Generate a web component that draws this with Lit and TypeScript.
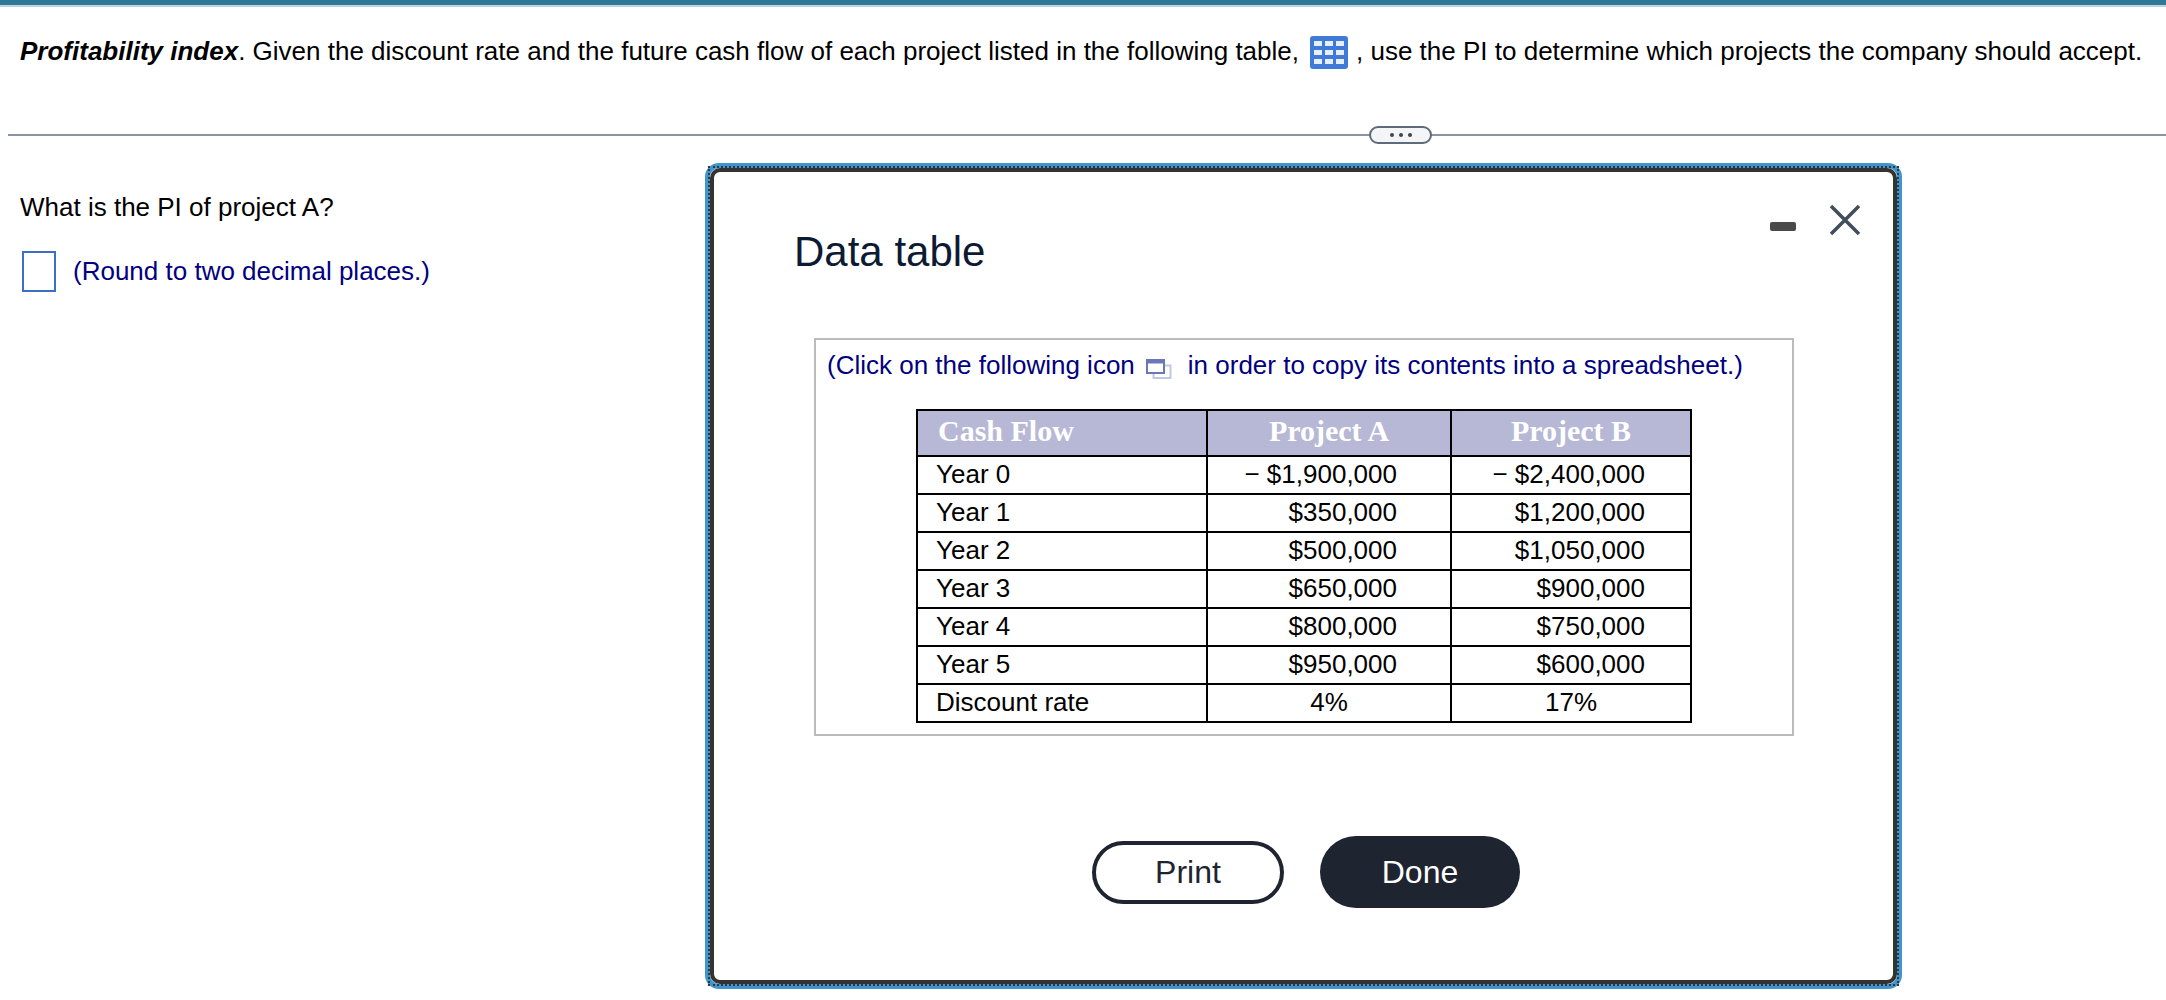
import { LitElement, html, css } from 'lit';
import { customElement } from 'lit/decorators.js';

const rows = [
  ['Year 0', '\u2212 $1,900,000', '\u2212 $2,400,000'],
  ['Year 1', '$350,000', '$1,200,000'],
  ['Year 2', '$500,000', '$1,050,000'],
  ['Year 3', '$650,000', '$900,000'],
  ['Year 4', '$800,000', '$750,000'],
  ['Year 5', '$950,000', '$600,000'],
];

@customElement('app-root')
export class AppRoot extends LitElement {
  static styles = css`
    :host {
      display: block;
      position: relative;
      height: 1000px;
      overflow: hidden;
      background: #fff;
      color: #000;
      font-family: "Liberation Sans", Arial, sans-serif;
      font-size: 26px;
    }
    .topbar {
      height: 5px;
      background: #2f7898;
      border-bottom: 2px solid #c0d3de;
    }
    .question {
      height: 127px;
      box-sizing: border-box;
      padding: 28px 0 0 20px;
      line-height: 32px;
      white-space: nowrap;
    }
    .grid-icon {
      display: inline-block;
      width: 38px;
      height: 33px;
      margin: 0 8px 0 11px;
      vertical-align: -9px;
    }
    .divider {
      position: relative;
      height: 2px;
      margin-left: 8px;
      background: #8a94a0;
    }
    .handle {
      position: absolute;
      left: 1361px;
      top: -8px;
      box-sizing: border-box;
      width: 63px;
      height: 18px;
      display: flex;
      align-items: center;
      justify-content: center;
      gap: 5px;
      background: #f3f5f7;
      border: 2px solid #5f6b7a;
      border-radius: 9px;
    }
    .handle i {
      width: 4px;
      height: 4px;
      border-radius: 50%;
      background: #3c4654;
    }
    .work {
      padding: 55px 0 0 20px;
    }
    .work p {
      margin: 0;
      line-height: 32px;
    }
    .answer {
      display: flex;
      align-items: center;
      gap: 17px;
      margin: 28px 0 0 2px;
      color: #000080;
    }
    .box {
      width: 34px;
      height: 41px;
      box-sizing: border-box;
      border: 2px solid #3a6fc4;
    }
    .dialog {
      position: absolute;
      left: 705px;
      top: 163px;
      width: 1197px;
      height: 826px;
      box-sizing: border-box;
      border: 5px solid #4095cf;
      border-radius: 14px;
      background: #fff;
    }
    .dialog::after {
      content: "";
      position: absolute;
      inset: -2px;
      border: 2px dotted #33383d;
      pointer-events: none;
    }
    .frame {
      position: relative;
      height: 100%;
      box-sizing: border-box;
      border: 4px solid #333;
      border-radius: 10px;
      padding: 56px 0 0 80px;
    }
    .window-controls {
      position: absolute;
      right: 32px;
      top: 32px;
      display: flex;
      align-items: center;
      gap: 33px;
    }
    .minimize {
      width: 26px;
      height: 9px;
      margin-top: 13px;
      border-radius: 2px;
      background: #4a4a4a;
    }
    .close {
      display: block;
      width: 32px;
      height: 32px;
    }
    h1 {
      margin: 0;
      font-size: 42px;
      font-weight: 400;
      line-height: 48px;
      color: #0d1a33;
    }
    .panel {
      box-sizing: border-box;
      width: 980px;
      height: 398px;
      margin: 62px 0 0 20px;
      padding: 8px 11px 0;
      border: 2px solid #bbb;
    }
    .hint {
      margin: 0;
      line-height: 34px;
      color: #000080;
      white-space: nowrap;
    }
    .copy-icon {
      display: inline-block;
      width: 26px;
      height: 20px;
      margin: 0 16px 0 11px;
      vertical-align: -5px;
    }
    table {
      width: 776px;
      margin: 27px 0 0 89px;
      border-collapse: collapse;
      table-layout: fixed;
      border: 2px solid #000;
    }
    th, td {
      border: 2px solid #000;
      padding: 0;
    }
    th {
      height: 46px;
      padding-bottom: 5px;
      box-sizing: border-box;
      background: #b6b8d6;
      color: #fff;
      font-family: "Liberation Serif", "Times New Roman", serif;
      font-size: 30px;
      font-weight: 700;
      text-align: center;
    }
    th.first {
      text-align: left;
      padding-left: 20px;
    }
    td {
      height: 36px;
      line-height: 34px;
      padding-bottom: 2px;
      box-sizing: border-box;
      text-align: right;
    }
    td.first {
      text-align: left;
      padding-left: 18px;
    }
    td.a { padding-right: 53px; }
    td.b { padding-right: 45px; }
    td.rate { text-align: center; padding-right: 0; }
    .c1 { width: 290px; }
    .c2 { width: 244px; }
    .actions {
      display: flex;
      align-items: center;
      gap: 36px;
      margin: 100px 0 0 298px;
    }
    button {
      font-family: inherit;
      font-size: 32px;
      border-radius: 36px;
      padding: 0;
      box-sizing: border-box;
    }
    .print {
      width: 192px;
      height: 63px;
      border: 4px solid #1e2430;
      background: #fff;
      color: #1e2430;
    }
    .done {
      width: 200px;
      height: 72px;
      border: none;
      background: #1e2430;
      color: #fff;
    }
  `;

  render() {
    return html`
      <div class="topbar"></div>
      <div class="question">
        <b><i>Profitability index</i></b>. Given the discount rate and the future cash flow of each project listed in the following table,<svg class="grid-icon" viewBox="0 0 38 33">
          <rect width="38" height="33" rx="3" fill="#3f7bd6"></rect>
          <path fill="#e6effb" d="M4 5h8v5H4zM15 5h8v5h-8zM26 5h8v5h-8zM4 14h8v5H4zM15 14h8v5h-8zM26 14h8v5h-8zM4 23h8v5H4zM15 23h8v5h-8zM26 23h8v5h-8z"></path>
        </svg>, use the PI to determine which projects the company should accept.
      </div>
      <div class="divider">
        <div class="handle"><i></i><i></i><i></i></div>
      </div>
      <div class="work">
        <p>What is the PI of project A?</p>
        <div class="answer">
          <span class="box"></span>
          <span>(Round to two decimal places.)</span>
        </div>
      </div>
      <section class="dialog">
        <div class="frame">
          <div class="window-controls">
            <span class="minimize"></span>
            <svg class="close" viewBox="0 0 32 32">
              <path d="M2 2L30 30M30 2L2 30" stroke="#3f4d5c" stroke-width="3.5" fill="none"></path>
            </svg>
          </div>
          <h1>Data table</h1>
          <div class="panel">
            <p class="hint">(Click on the following icon<svg class="copy-icon" viewBox="0 0 26 20">
                <rect x="7.5" y="6.5" width="17" height="12.5" fill="none" stroke="#c3c8e2" stroke-width="2"></rect>
                <rect x="1" y="1" width="17" height="13" fill="#fff" stroke="#6b78b8" stroke-width="2"></rect>
                <rect x="1" y="1" width="17" height="3.5" fill="#6b78b8"></rect>
              </svg>in order to copy its contents into a spreadsheet.)</p>
            <table>
              <colgroup><col class="c1" /><col class="c2" /><col /></colgroup>
              <tr>
                <th class="first">Cash Flow</th>
                <th>Project A</th>
                <th>Project B</th>
              </tr>
              ${rows.map(
                (r) => html`<tr>
                  <td class="first">${r[0]}</td>
                  <td class="a">${r[1]}</td>
                  <td class="b">${r[2]}</td>
                </tr>`,
              )}
              <tr>
                <td class="first">Discount rate</td>
                <td class="rate">4%</td>
                <td class="rate">17%</td>
              </tr>
            </table>
          </div>
          <div class="actions">
            <button class="print">Print</button>
            <button class="done">Done</button>
          </div>
        </div>
      </section>
    `;
  }
}
